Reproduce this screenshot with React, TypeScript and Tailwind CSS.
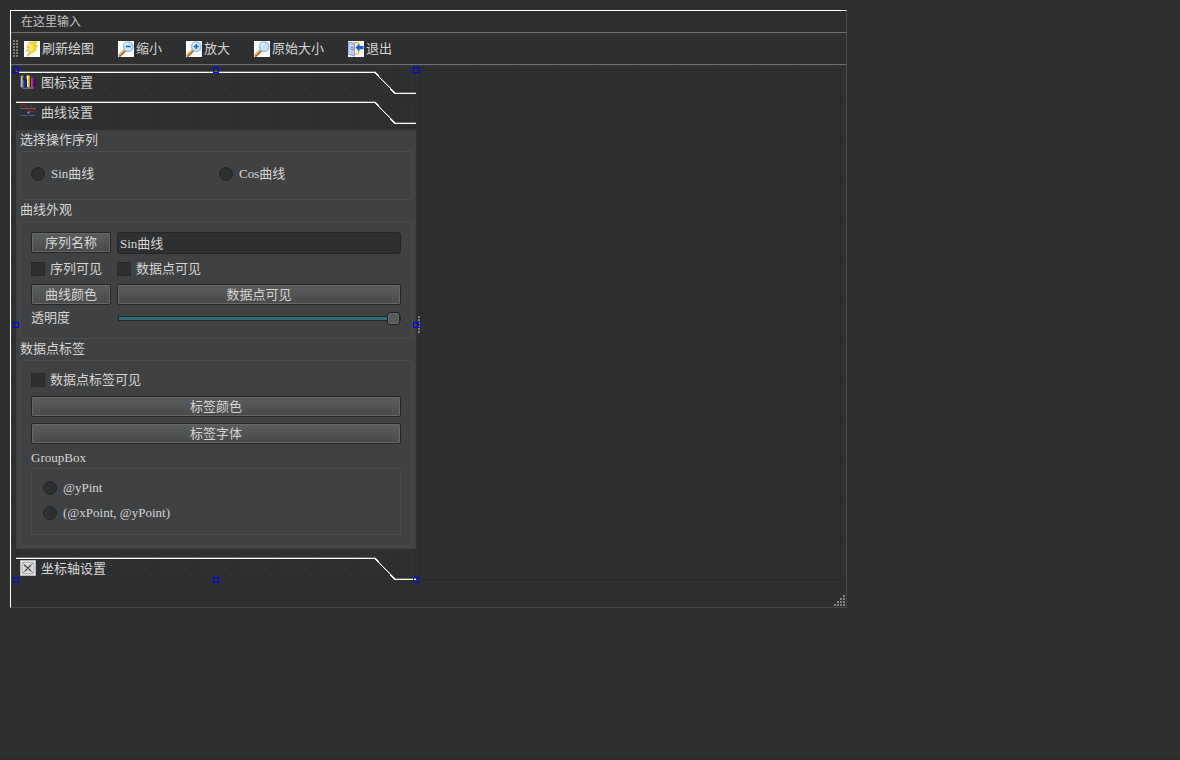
import React, { useState } from 'react';

interface ToolItem {
  label: string;
  icon: React.ReactNode;
}

interface TabHeaderProps {
  label: string;
  icon: React.ReactNode;
  expanded?: boolean;
}

const FONT = "font-['Liberation_Serif','Noto_Sans_CJK_SC',serif]";

const Magnifier = ({ sign }: { sign?: 'plus' | 'minus' }) => (
  <svg className="h-4 w-4 bg-white" viewBox="0 0 16 16" fill="none">
    <path d="M2 14.5 7 9.5" stroke="#8f6a48" strokeWidth="2.6" strokeLinecap="round" />
    <path d="M1.3 13.8 6 9.3" stroke="#f0a548" strokeWidth="1.6" strokeLinecap="round" />
    <circle cx="10.2" cy="5.6" r="4.8" fill="#bfe9f7" stroke="#a3b8de" strokeWidth="1.2" />
    <path d="M7 5a3.3 3.3 0 0 1 3-2.6" stroke="#f2fcff" strokeWidth="1.2" />
    {sign && <path d="M7.7 5.5h5" stroke="#1c5fae" strokeWidth="1.4" />}
    {sign === 'plus' && <path d="M10.200 3v5" stroke="#1c5fae" strokeWidth="1.4" />}
  </svg>
);

const RefreshIcon = () => (
  <svg className="h-4 w-4 bg-white" viewBox="0 0 16 16">
    <path
      d="M5.5 1.2 13 .8 9.8 4.8l3.7-.3-3 3.700 2 .3L3 15.200l2.800-5.400-3.300.2L6 6.200l-3 .1Z"
      fill="#f6e52c"
      stroke="#c9ae2a"
      strokeWidth=".8"
    />
    <path d="M6 2.2 4.5 5.3l4-.3-3.5 4 3-.2" fill="none" stroke="#fffbb0" strokeWidth=".9" />
  </svg>
);

const ExitIcon = () => (
  <svg className="h-4 w-4 bg-white" viewBox="0 0 16 16">
    <path d="M6 1.5h4.500V13H6" fill="#fff6cf" stroke="#d9a93c" />
    <path d="M.8 1.200 6.500 2.300v12.900L.8 13.300Z" fill="#b4c8f2" stroke="#7288c4" strokeWidth=".8" />
    <path d="M2.200 2.800v9.700" stroke="#e6eeff" />
    <circle cx="4" cy="7.500" r="1.200" fill="#fff" stroke="#4a5f9c" strokeWidth=".8" />
    <path d="M7.500 6.500 11.500 2.500v2.500H15.500v3.200h-4v2.500Z" fill="#0d62cf" />
  </svg>
);

const ChartIcon = () => (
  <svg className="h-4 w-4" viewBox="0 0 16 16">
    <path d="M.5 12.500h13l1 .5-1.500 2H3Z" fill="#6c6d6e" />
    <path d="M.5 3 2 1l1.800 1.500V13H.5Z" fill="#8e8f90" />
    <path d="M1.500 2.500V12" stroke="#c4c4c4" strokeWidth=".8" />
    <path d="M3.500 6 5 5l1.500 1v8h-3Z" fill="#2424a8" />
    <path d="M6.500 2 8 1l2 1v11H6.500Z" fill="#d8cc28" />
    <path d="M7.500 2V12.500" stroke="#fff68a" />
    <path d="M10.500 4 12 2.800 14 4v9.500h-3.500Z" fill="#a018a0" />
    <path d="M11.700 4.500V13" stroke="#d048d0" strokeWidth=".8" />
    <path d="M3.800 3v3M6.500 5v8M10.300 3v10M14.200 5v8" stroke="#101012" strokeWidth=".9" />
  </svg>
);

const CurveIcon = () => (
  <svg className="h-4 w-4" viewBox="0 0 16 16" fill="none">
    <path d="M0 4.500h16M0 11.500h16" stroke="#5f6061" />
    <path d="M0 3C2-.5 5-.2 7 3.500S12 10 16 4.500" stroke="#c01822" />
    <path d="M0 11C2 6.500 5 6.500 7.500 11S13 16.500 16 11" stroke="#1f2878" />
    <path d="M7 8.500h3M8.500 7v3" stroke="#7b7c7d" />
  </svg>
);

const AxisIcon = () => (
  <svg className="h-4 w-4 bg-[#ececec]" viewBox="0 0 16 16" fill="none">
    <path d="M.5.5h15v15H.5ZM2.500 2.500h11v11h-11Z" stroke="#b0b0b0" />
    <path d="M8 0v16M0 8h16M5 0v16M11 0v16M0 5h16M0 11h16" stroke="#bcbcbc" strokeWidth=".6" />
    <path d="m3 3 10 10M3 13 13 3" stroke="#8a8a8a" strokeWidth=".8" />
    <path d="m4 5 4 3 3-3M5 11l3-3 3 3" stroke="#444" strokeWidth="1.100" />
  </svg>
);

// Small grid of raised dots used on drag handles
const GripDots = ({ width, id }: { width: number; id: string }) => (
  <svg width={width} height={18} aria-hidden="true">
    <defs>
      <pattern id={id} width="3" height="3" patternUnits="userSpaceOnUse">
        <rect width="2" height="2" fill="#7a7b7c" />
      </pattern>
    </defs>
    <rect width={width} height="18" fill={`url(#${id})`} />
  </svg>
);

const SizeGrip = () => (
  <svg width="12" height="12" fill="#858687" aria-hidden="true">
    {[0, 1, 2, 3].map((row) =>
      [0, 1, 2, 3]
        .filter((col) => col >= 3 - row)
        .map((col) => <rect key={`${row}-${col}`} x={col * 3} y={row * 3} width="2" height="2" />)
    )}
  </svg>
);

const TOOLS: ToolItem[] = [
  { label: '刷新绘图', icon: <RefreshIcon /> },
  { label: '缩小', icon: <Magnifier sign="minus" /> },
  { label: '放大', icon: <Magnifier sign="plus" /> },
  { label: '原始大小', icon: <Magnifier /> },
  { label: '退出', icon: <ExitIcon /> },
];

const HANDLES = [
  '-left-[3px] -top-[3px]',
  'left-1/2 -ml-[3px] -top-[3px]',
  '-right-[3px] -top-[3px]',
  '-left-[3px] top-1/2 -mt-[3px]',
  '-right-[3px] top-1/2 -mt-[3px]',
  '-left-[3px] -bottom-[3px]',
  'left-1/2 -ml-[3px] -bottom-[3px]',
  '-right-[3px] -bottom-[3px]',
];

const TabHeader: React.FC<TabHeaderProps> = ({ label, icon, expanded = false }) => (
  <button type="button" aria-expanded={expanded} className="relative flex h-6 w-full items-center gap-[5px] pl-1 text-left">
    <span className="absolute inset-x-0 top-px bottom-0 flex" aria-hidden="true">
      <span className="h-full flex-1 border-t border-[#6a6b6c]">
        <span className="block h-px bg-white" />
      </span>
      <svg width="20" height="23" fill="none" shapeRendering="crispEdges">
        <path d="M0 .5 20 21.500" stroke="#6a6b6c" />
        <path d="M-1 .5 20 22.500" stroke="#fff" />
      </svg>
      <span className="flex w-[21px] flex-col pt-[21px]">
        <span className="block h-px bg-[#6a6b6c]" />
        <span className="block h-px bg-white" />
      </span>
    </span>
    {icon}
    <span className="pt-px">{label}</span>
  </button>
);

const GroupBox: React.FC<{ title: string; children: React.ReactNode }> = ({ title, children }) => (
  <fieldset className="block">
    <legend className="block h-[21px] w-full leading-[20px]">{title}</legend>
    <div className="rounded-[2px] border border-[#4a4b4c] pt-[10px] pr-[11px] pb-[11px] pl-[10px]">{children}</div>
  </fieldset>
);

const PushButton: React.FC<{ children: React.ReactNode }> = ({ children }) => (
  <button
    type="button"
    className="h-[21px] w-full rounded-[2px] border border-[#242526] bg-linear-to-b from-[#5c5d5e] to-[#484948] text-center leading-[19px] inset-ring inset-ring-[#676869]"
  >
    {children}
  </button>
);

const CheckBox: React.FC<{ label: string }> = ({ label }) => (
  <label className="flex h-[18px] items-center gap-[5px]">
    <input type="checkbox" className="h-[14px] w-[14px] appearance-none border border-[#262728] bg-[#2e2f30] checked:bg-[#2d7478]" />
    {label}
  </label>
);

const RadioButton: React.FC<{ label: string; name: string }> = ({ label, name }) => (
  <label className="flex h-[18px] items-center gap-[6px]">
    <input
      type="radio"
      name={name}
      className="h-[14px] w-[14px] appearance-none rounded-full border border-[#232425] bg-[#2e2f30] checked:bg-[#2d7478]"
    />
    {label}
  </label>
);

const CurvePage = () => {
  const [seriesName, setSeriesName] = useState('Sin曲线');
  const [opacity, setOpacity] = useState(100);

  return (
    <div className="relative bg-[#404142] pr-[3px] pb-[2px] pl-1">
      <GroupBox title="选择操作序列">
        <div className="grid grid-cols-2 gap-[6px] pt-[3px] pb-[5px]">
          <RadioButton name="series" label="Sin曲线" />
          <RadioButton name="series" label="Cos曲线" />
        </div>
      </GroupBox>

      <GroupBox title="曲线外观">
        <div className="grid grid-cols-[80px_1fr] gap-[6px] pb-[2px]">
          <PushButton>序列名称</PushButton>
          <input
            type="text"
            aria-label="序列名称"
            value={seriesName}
            onChange={(e) => setSeriesName(e.target.value)}
            className="h-[22px] w-full rounded-[3px] border border-[#242526] bg-[#2e2f30] px-[2px] pb-px outline-none"
          />
          <CheckBox label="序列可见" />
          <CheckBox label="数据点可见" />
          <PushButton>曲线颜色</PushButton>
          <PushButton>数据点可见</PushButton>
          <label htmlFor="opacity" className="h-[14px] leading-[14px]">
            透明度
          </label>
          <div className="flex h-[14px] items-center pl-px">
            <input
              id="opacity"
              type="range"
              min={0}
              max={100}
              value={opacity}
              onChange={(e) => setOpacity(Number(e.target.value))}
              className="h-[13px] w-full appearance-none bg-transparent [&::-webkit-slider-runnable-track]:h-[5px] [&::-webkit-slider-runnable-track]:border [&::-webkit-slider-runnable-track]:border-[#232425] [&::-webkit-slider-runnable-track]:bg-[#2d7078] [&::-webkit-slider-thumb]:-mt-[5px] [&::-webkit-slider-thumb]:h-[13px] [&::-webkit-slider-thumb]:w-[13px] [&::-webkit-slider-thumb]:appearance-none [&::-webkit-slider-thumb]:rounded-[3px] [&::-webkit-slider-thumb]:border [&::-webkit-slider-thumb]:border-[#202122] [&::-webkit-slider-thumb]:bg-[#5a5b5c] [&::-webkit-slider-thumb]:inset-ring [&::-webkit-slider-thumb]:inset-ring-[#6a6b6c]"
            />
          </div>
        </div>
      </GroupBox>

      <GroupBox title="数据点标签">
        <div className="flex flex-col gap-[6px]">
          <div className="pb-px">
            <CheckBox label="数据点标签可见" />
          </div>
          <PushButton>标签颜色</PushButton>
          <PushButton>标签字体</PushButton>
          <fieldset>
            <legend className="block h-[18px] w-full leading-[16px]">GroupBox</legend>
            <div className="flex flex-col gap-[7px] rounded-[2px] border border-[#4a4b4c] pt-[10px] pb-3 pl-[11px]">
              <RadioButton name="label-format" label="@yPint" />
              <RadioButton name="label-format" label="(@xPoint, @yPoint)" />
            </div>
          </fieldset>
        </div>
      </GroupBox>
    </div>
  );
};

const App: React.FC = () => {
  return (
    <div className={`flex min-h-screen flex-col justify-between bg-[#2e2f30] text-[13px] leading-[18px] text-[#d6d6d6] ${FONT}`}>
      <main className="p-[10px]">
        <div className="w-full max-w-[837px] border border-t-white border-r-[#464748] border-b-[#464748] border-l-white">
          {/* Menu bar */}
          <nav className="flex h-[22px] items-center border-b border-[#6f7071] pl-[5px]">
            <button type="button" className="bg-[#2c2d2e] px-[5px] text-[12px] text-[#c4c4c4]">
              在这里输入
            </button>
          </nav>

          {/* Tool bar */}
          <div role="toolbar" className="flex h-8 items-center border-b border-[#6f7071] pl-[2px]">
            <GripDots width={6} id="toolbar-grip" />
            <div className="flex gap-6 pl-[5px]">
              {TOOLS.map((tool) => (
                <button key={tool.label} type="button" className="flex items-center gap-[2px]">
                  {tool.icon}
                  <span>{tool.label}</span>
                </button>
              ))}
            </div>
          </div>

          {/* Form canvas with a 10px dot grid */}
          <div className="flex bg-[conic-gradient(at_1px_1px,transparent_75%,#484949_0)] bg-[size:10px_10px] p-[5px]">
            <div className="relative w-[400px] shrink-0">
              <div className="absolute inset-0 border border-dotted border-[#282929]" />
              <div className="flex flex-col">
                <div className="flex flex-col gap-[6px] pb-[6px]">
                  <TabHeader label="图标设置" icon={<ChartIcon />} />
                  <TabHeader label="曲线设置" icon={<CurveIcon />} expanded />
                </div>
                <CurvePage />
                <div className="pt-[7px]">
                  <TabHeader label="坐标轴设置" icon={<AxisIcon />} />
                </div>
              </div>
              {HANDLES.map((place) => (
                <span key={place} className={`absolute z-10 h-[6px] w-[6px] border border-[#0000ff] ${place}`} />
              ))}
            </div>
            <div className="flex w-1 shrink-0 items-center justify-end overflow-hidden bg-[#2e2f30]">
              <GripDots width={2} id="splitter-grip" />
            </div>
            <section aria-label="chart" className="flex-1 border border-[#252627] bg-[#2e2f30]" />
          </div>

          {/* Status bar */}
          <div className="flex h-[22px] items-end justify-end">
            <SizeGrip />
          </div>
        </div>
      </main>
      <div className="h-[3px] bg-[#30272a]" />
    </div>
  );
};

export default App;
